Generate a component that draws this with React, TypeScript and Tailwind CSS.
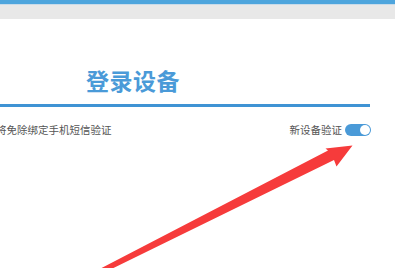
import React from 'react'

const cjk = { fontFamily: '"Microsoft YaHei", "Noto Sans CJK SC", "Noto Sans", sans-serif' }

function Toggle({ on }: { on: boolean }) {
  return (
    <div
      className={`w-[26px] h-[12px] rounded-full flex items-center px-px ${on ? 'bg-[#4a9ad8] justify-end' : 'bg-[#cfcfcf] justify-start'}`}
    >
      <div className="w-[10px] h-[10px] rounded-full bg-white" />
    </div>
  )
}

export default function App() {
  return (
    <div className="relative w-[395px] h-[268px] overflow-hidden bg-white" style={cjk}>
      {/* top chrome */}
      <div className="h-[4px] bg-[#4ea5dd]" />
      <div className="h-px bg-[#c9dbe9]" />
      <div className="h-[14px] bg-[#e8e8e8]" />

      {/* title */}
      <div className="pl-[86px] pt-[47px] h-[85px]">
        <h1 className="text-[23px] leading-[28px] font-bold text-[#4a9ad8] tracking-[0.5px]">登录设备</h1>
      </div>
      <div className="w-[370px] h-[3px] bg-[#3f93d4]" />

      {/* options row */}
      <div className="flex items-center justify-between w-[371px] mt-[16px] h-[14px]">
        <span className="-ml-[4px] text-[10.5px] text-[#555] whitespace-nowrap">将免除绑定手机短信验证</span>
        <div className="flex items-center gap-[3px]">
          <span className="text-[10.5px] text-[#555]">新设备验证</span>
          <Toggle on />
        </div>
      </div>

      {/* annotation arrow */}
      <svg className="absolute inset-0 pointer-events-none" width="395" height="268" viewBox="0 0 395 268">
        <polygon
          points="90,274 328,150.5 325.5,148.5 352.5,145.5 336.5,166.5 334,160 90,279.5"
          fill="#f63b3b"
        />
      </svg>
    </div>
  )
}
